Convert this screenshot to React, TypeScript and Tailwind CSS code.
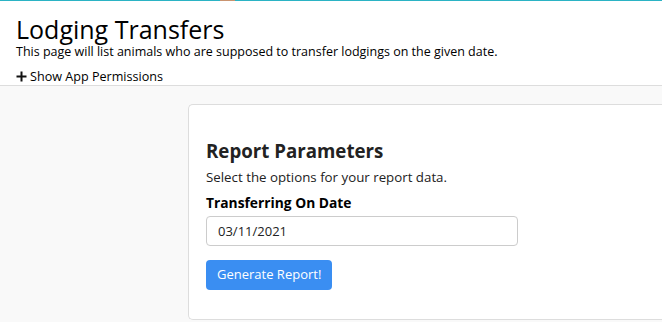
export default function App() {
  return (
    <div
      className="min-h-[322px] w-full overflow-hidden bg-[#f9f9f9] text-[#222]"
      style={{ fontFamily: '"Open Sans", "Noto Sans", Arial, sans-serif' }}
    >
      {/* top accent bar */}
      <div className="relative h-px bg-[#2bb3c4]">
        <div className="absolute left-[220px] top-0 h-px w-[15px] bg-[#c99470]" />
      </div>

      <header className="border-b border-[#dddddd] bg-white px-4 pt-[14px]">
        <h1 className="text-[25px] leading-[29px] text-black">Lodging Transfers</h1>
        <p className="text-[12.5px] leading-[16px] text-black">
          This page will list animals who are supposed to transfer lodgings on the given date.
        </p>
        <button className="mt-[8px] flex items-center gap-[3px] text-[12.6px] leading-[17px] text-black">
          <svg width="11" height="11" viewBox="0 0 11 11" aria-hidden>
            <path d="M5.5 0.5v10M0.5 5.5h10" stroke="#111" strokeWidth="2" />
          </svg>
          Show App Permissions
        </button>
      </header>

      <main className="pt-[18px] pl-[188px]">
        <section className="rounded-l-[5px] border border-r-0 border-[#dddddd] bg-white px-[17px] pt-[33px] pb-[29px]">
          <h2 className="text-[18.7px] font-bold leading-[25px] text-[#222]">Report Parameters</h2>
          <p className="mt-[5px] text-[13.3px] leading-[18px] text-[#222]">
            Select the options for your report data.
          </p>
          <label className="mt-[7px] block text-[13.8px] font-bold leading-[20px] text-black">
            Transferring On Date
          </label>
          <input
            defaultValue="03/11/2021"
            className="mt-[3px] block h-[30px] w-[312px] rounded-[4px] border border-[#cccccc] bg-white px-[11px] text-[13px] text-[#222] outline-none"
          />
          <button className="mt-[14px] h-[30px] rounded-[4px] bg-[#3a8ef2] px-[11px] text-[13px] text-white">
            Generate Report!
          </button>
        </section>
      </main>
    </div>
  );
}
